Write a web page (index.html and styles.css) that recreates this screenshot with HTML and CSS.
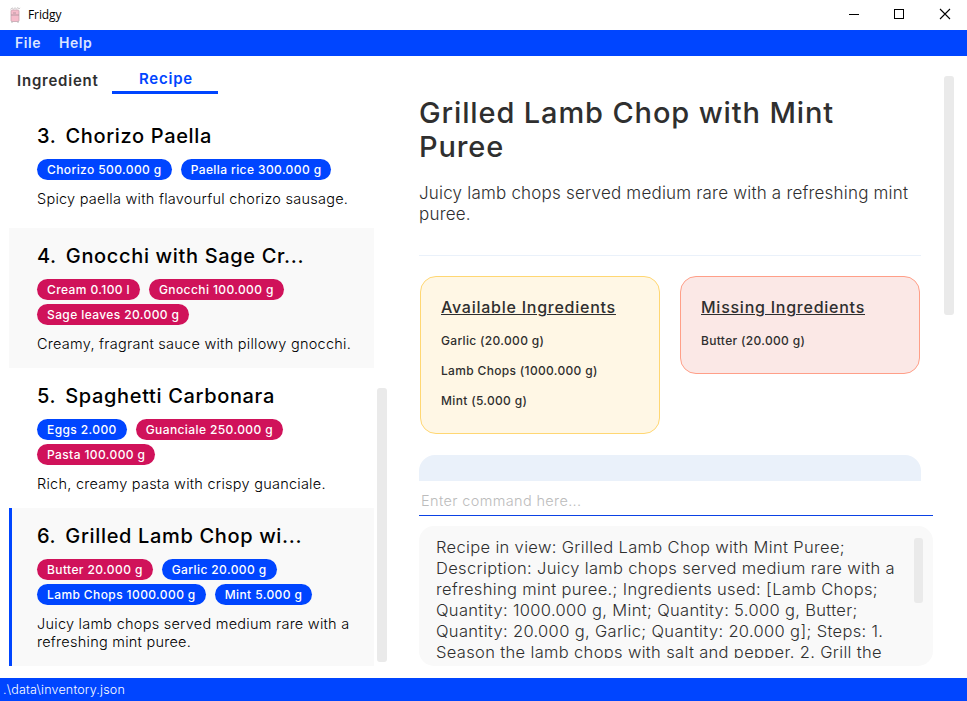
FILE: index.html
```html
<!DOCTYPE html>
<html lang="en">
<head>
<meta charset="utf-8">
<title>Fridgy</title>
<link rel="stylesheet" href="styles.css">
</head>
<body>
<header class="titlebar">
  <svg class="app-icon" width="12" height="16" viewBox="0 0 12 16">
    <path d="M1.500 2.500 3 .8 4.500 2 6 .8 7.500 1.800 9 .5 10 2 11 .8" fill="none" stroke="#cdc8ca" stroke-width="1"/>
    <rect x="2" y="3" width="8" height="11.500" rx="1" fill="#f6bccb" stroke="#c8a3ae" stroke-width=".8"/>
    <path d="M2 8h8M4 6h3" fill="none" stroke="#a8919b" stroke-width=".8"/>
    <path d="M2 15h2M8 15h2" stroke="#bbb" stroke-width="1"/>
  </svg>
  <span class="app-name">Fridgy</span>
  <div class="window-buttons">
    <svg width="12" height="12" viewBox="0 0 12 12"><path d="M2 6.500h10" stroke="#000"/></svg>
    <svg width="12" height="12" viewBox="0 0 12 12"><rect x="1.500" y="1.500" width="9" height="9" fill="none" stroke="#000"/></svg>
    <svg width="12" height="12" viewBox="0 0 12 12"><path d="M1 1 11 11M11 1 1 11" stroke="#000" stroke-width="1.100"/></svg>
  </div>
</header>
<nav class="menubar"><span>File</span><span>Help</span></nav>
<main class="content">
  <section class="sidebar">
    <div class="tabs">
      <div class="tab">Ingredient</div>
      <div class="tab active">Recipe</div>
    </div>
    <div class="list-wrap">
      <div class="list">
        <article class="recipe">
          <h2><span>3.</span><span>Chorizo Paella</span></h2>
          <div class="tags"><span class="tag">Chorizo 500.000 g</span><span class="tag">Paella rice 300.000 g</span></div>
          <p>Spicy paella with flavourful chorizo sausage.</p>
        </article>
        <article class="recipe alt">
          <h2><span>4.</span><span>Gnocchi with Sage Cr...</span></h2>
          <div class="tags"><span class="tag missing">Cream 0.100 l</span><span class="tag missing">Gnocchi 100.000 g</span><span class="tag missing">Sage leaves 20.000 g</span></div>
          <p>Creamy, fragrant sauce with pillowy gnocchi.</p>
        </article>
        <article class="recipe">
          <h2><span>5.</span><span>Spaghetti Carbonara</span></h2>
          <div class="tags"><span class="tag">Eggs 2.000</span><span class="tag missing">Guanciale 250.000 g</span><span class="tag missing">Pasta 100.000 g</span></div>
          <p>Rich, creamy pasta with crispy guanciale.</p>
        </article>
        <article class="recipe alt selected">
          <h2><span>6.</span><span>Grilled Lamb Chop wi...</span></h2>
          <div class="tags"><span class="tag missing">Butter 20.000 g</span><span class="tag">Garlic 20.000 g</span><span class="tag">Lamb Chops 1000.000 g</span><span class="tag">Mint 5.000 g</span></div>
          <p>Juicy lamb chops served medium rare with a<br>refreshing mint puree.</p>
        </article>
      </div>
      <div class="list-track"><div class="thumb"></div></div>
    </div>
  </section>
  <section class="main">
    <div class="detail-wrap">
      <div class="detail">
        <h1>Grilled Lamb Chop with Mint<br>Puree</h1>
        <p class="description">Juicy lamb chops served medium rare with a refreshing mint<br>puree.</p>
        <div class="cards">
          <div class="card available">
            <h3>Available Ingredients</h3>
            <p>Garlic (20.000 g)</p>
            <p>Lamb Chops (1000.000 g)</p>
            <p>Mint (5.000 g)</p>
          </div>
          <div class="card lacking">
            <h3>Missing Ingredients</h3>
            <p>Butter (20.000 g)</p>
          </div>
        </div>
        <div class="steps"></div>
      </div>
      <div class="detail-track"><div class="thumb"></div></div>
    </div>
    <div class="command">Enter command here...</div>
    <div class="result">
      <div class="result-text">Recipe in view: Grilled Lamb Chop with Mint Puree;<br>Description: Juicy lamb chops served medium rare with a<br>refreshing mint puree.; Ingredients used: [Lamb Chops;<br>Quantity: 1000.000 g, Mint; Quantity: 5.000 g, Butter;<br>Quantity: 20.000 g, Garlic; Quantity: 20.000 g]; Steps: 1.<br>Season the lamb chops with salt and pepper. 2. Grill the</div>
      <div class="result-track"><div class="thumb"></div></div>
    </div>
  </section>
</main>
<footer class="status">.\data\inventory.json</footer>
</body>
</html>
```
FILE: styles.css
```css
* { box-sizing: border-box; }
body {
  margin: 0;
  height: 701px;
  display: flex;
  flex-direction: column;
  overflow: hidden;
  background: #fff;
  color: #2f2f2f;
  font-family: Inter, "Open Sans", sans-serif;
  white-space: nowrap;
}
h1, h2, h3, p { margin: 0; }

.titlebar { height: 30px; display: flex; align-items: center; padding: 0 16px 0 9px; flex: none; }
.app-icon { margin-right: 7px; }
.app-name { font: 12px "Open Sans", sans-serif; color: #000; letter-spacing: -.1px; margin-bottom: 1px; }
.window-buttons { margin-left: auto; display: flex; gap: 34px; margin-bottom: 2px; }
.window-buttons svg { display: block; }

.menubar {
  height: 26px;
  flex: none;
  display: flex;
  align-items: center;
  gap: 18px;
  padding: 0 0 2px 15px;
  background: #0045ff;
  color: #dbe4ff;
  font-size: 14px;
  font-weight: 600;
  letter-spacing: .55px;
}

.content { flex: 1; min-height: 0; display: flex; }
.sidebar { width: 390px; display: flex; flex-direction: column; padding-bottom: 12px; }
.tabs { height: 38px; margin-bottom: 14px; flex: none; display: flex; font-size: 15px; font-weight: 600; letter-spacing: .78px; }
.tab { width: 112px; padding: 12px 0 0 17px; line-height: 26px; }
.tab.active { width: 106px; padding: 10px 0 0 2px; text-align: center; color: #0045ff; border-bottom: 3px solid #0045ff; }

.list-wrap { flex: 1; min-height: 0; display: flex; gap: 3px; padding-left: 9px; }
.list { width: 365px; overflow: hidden; }
.recipe { min-height: 120px; padding: 15px 10px 15px 28px; color: #000; }
.recipe.alt { background: #f9f9f9; }
.recipe.selected { border-left: 3px solid #0045ff; padding-left: 25px; }
.recipe h2 { display: flex; gap: 9px; font-size: 20px; line-height: 26px; font-weight: 500; letter-spacing: .65px; margin-bottom: 10px; }
.tags { display: flex; flex-wrap: wrap; gap: 4px 9px; margin-bottom: 10px; }
.tag { height: 21px; line-height: 21px; padding: 0 10px; border-radius: 11px; background: #0045ff; color: #fff; font-size: 12px; font-weight: 500; letter-spacing: .4px; }
.tag.missing { background: #d0125a; }
.recipe p { font-size: 14.5px; line-height: 18px; font-weight: 300; letter-spacing: .25px; }

.thumb { background: #eaeaea; border-radius: 3px; }
.list-track { padding-top: 280px; }
.list-track .thumb { width: 10px; height: 274px; }

.main { flex: 1; padding: 20px 13px 12px 29px; display: flex; flex-direction: column; }
.detail-wrap { height: 405px; flex: none; display: flex; justify-content: space-between; }
.detail { width: 502px; overflow: hidden; padding-top: 20px; flex: none; }
.detail h1 { font-size: 29px; line-height: 34px; font-weight: 500; letter-spacing: .87px; }
.description { font-size: 17px; line-height: 21px; font-weight: 300; letter-spacing: .2px; padding: 19px 0 30px; border-bottom: 1px solid #eaf1fa; }
.cards { display: flex; gap: 20px; align-items: flex-start; padding: 20px 1px 0; margin-bottom: 21px; }
.card { width: 240px; flex: none; border: 1px solid; border-radius: 16px; padding: 20px 20px 17px; }
.available { background: #fff7e5; border-color: #ffd773; }
.lacking { background: #fbe8e6; border-color: #ff9f88; }
.card h3 { font-size: 16px; line-height: 20px; font-weight: 500; letter-spacing: .75px; text-decoration: underline; text-decoration-thickness: 1px; text-underline-offset: 1px; margin-bottom: 9px; }
.card p { font-size: 12px; line-height: 30px; font-weight: 500; letter-spacing: .33px; }
.steps { height: 200px; border-radius: 16px; background: #eaf1fa; }
.detail-track { width: 10px; }
.detail-track .thumb { height: 239px; }

.command { height: 35px; flex: none; width: 514px; border-bottom: 1px solid #0b42e5; padding-left: 2px; line-height: 40px; font-size: 14.5px; font-weight: 300; letter-spacing: .36px; color: #bcbcbc; }
.result { width: 514px; height: 140px; flex: none; margin-top: 10px; border-radius: 15px; background: #f9f9f9; display: flex; justify-content: space-between; padding: 11px 10px 8px 17px; }
.result-text { font-size: 16.5px; line-height: 21px; font-weight: 300; letter-spacing: .34px; overflow: hidden; }
.result-track { width: 9px; padding-top: 1px; }
.result-track .thumb { height: 65px; }

.status { height: 23px; flex: none; background: #0045ff; color: #fff; padding-left: 3px; line-height: 23px; font-size: 12.5px; font-weight: 300; letter-spacing: .2px; }
```
